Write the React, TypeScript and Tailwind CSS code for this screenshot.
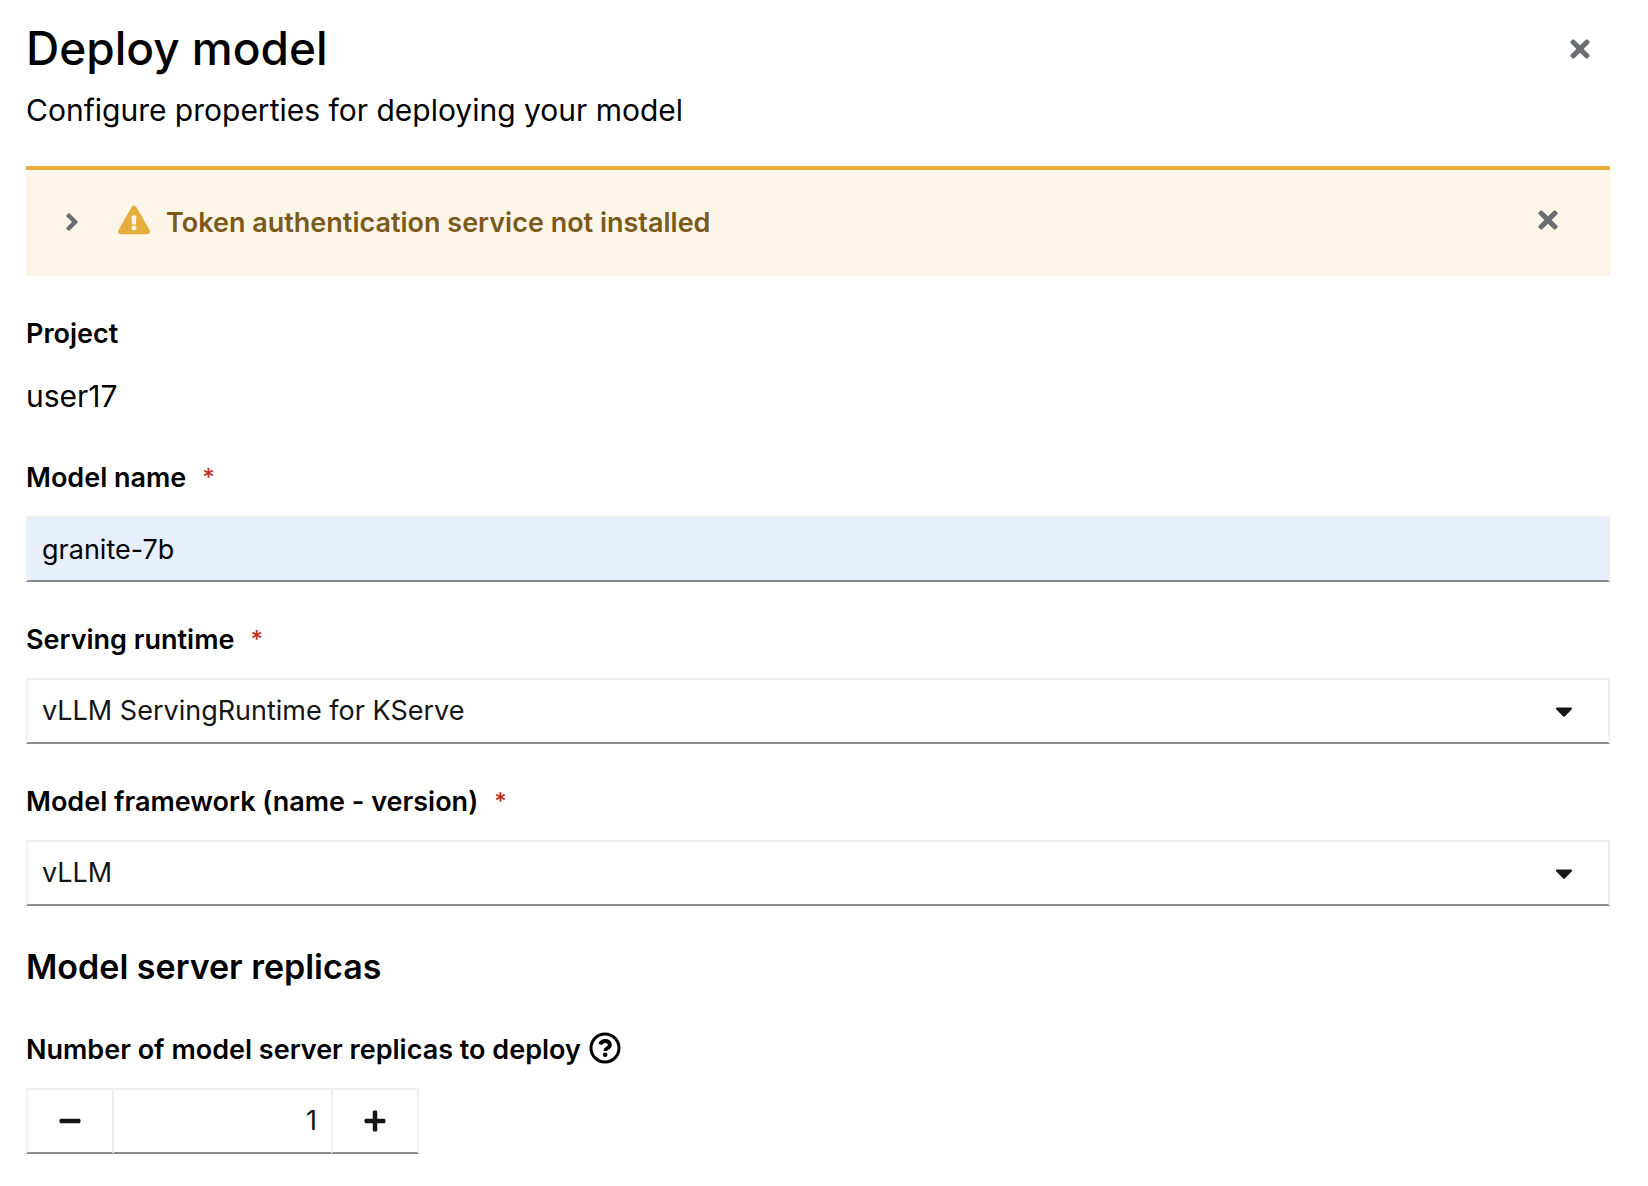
import { useState, type ReactNode } from "react";
import { FaAngleRight, FaCaretDown, FaExclamationTriangle, FaMinus, FaPlus, FaTimes } from "react-icons/fa";

function FieldLabel({ htmlFor, required, children }: { htmlFor: string; required?: boolean; children: ReactNode }) {
  return (
    <label htmlFor={htmlFor} className="flex h-12 items-center pt-1 text-[27px] leading-10 font-semibold">
      {children}
      {required && <span className="ml-4 text-[24px] font-medium text-[#c03020]">*</span>}
    </label>
  );
}

function SelectField({ id, label, value }: { id: string; label: string; value: string }) {
  return (
    <div className="mt-8">
      <FieldLabel htmlFor={id} required>{label}</FieldLabel>
      <div className="relative mt-4">
        <select
          id={id}
          defaultValue={value}
          className="h-[66px] w-full appearance-none rounded-none border-2 border-[#f0f0f0] border-b-[#8a8b91] bg-white px-3.5 text-[27px] text-[#151515]"
        >
          <option>{value}</option>
        </select>
        <FaCaretDown className="pointer-events-none absolute top-[19px] right-8 size-7 text-[#151515]" />
      </div>
    </div>
  );
}

function HelpIcon() {
  return (
    <svg viewBox="0 0 32 32" className="size-8" fill="none" stroke="currentColor" aria-hidden="true">
      <circle cx="16" cy="16" r="14" strokeWidth="3" />
      <path d="M11.2 12.4C12 10.200 13.800 9 16.200 9c2.800 0 4.700 1.500 4.700 3.700 0 1.800-1.100 2.700-2.400 3.500-1.500.9-2.200 1.300-2.200 2.700" strokeWidth="3.800" />
      <circle cx="16.200" cy="22.800" r="2.300" fill="currentColor" stroke="none" />
    </svg>
  );
}

export default function App() {
  const [replicas, setReplicas] = useState("1");
  const step = (n: number) => setReplicas(String(Math.max(0, Number(replicas) + n)));

  return (
    <main className="min-h-screen bg-white pt-5 pr-[38px] pb-8 pl-[26px] font-['Inter',sans-serif] text-black">
      <header className="flex items-start justify-between">
        <div>
          <h1 className="text-[46px] leading-[56px] font-medium">Deploy model</h1>
          <p className="mt-3 text-[30px] leading-[44px]">Configure properties for deploying your model</p>
        </div>
        <button type="button" aria-label="Close" className="mt-[15px] mr-4 text-[#6a6e73]">
          <FaTimes className="size-7" />
        </button>
      </header>

      <section className="mt-[34px] flex h-[110px] items-start border-t-4 border-[#e5ad3b] bg-[#fdf6e8] pt-8 pr-12 pl-8">
        <button type="button" aria-label="Show details" className="flex h-10 items-center text-[#6a6e73]">
          <FaAngleRight className="size-7" />
        </button>
        <span className="ml-8 flex h-9 items-center text-[#e5ad3b]">
          <FaExclamationTriangle className="size-8" />
        </span>
        <h2 className="ml-4 flex-1 pt-px text-[27px] leading-10 font-semibold text-[#795a1a]">Token authentication service not installed</h2>
        <button type="button" aria-label="Dismiss alert" className="flex h-9 items-center text-[#6a6e73]">
          <FaTimes className="size-7" />
        </button>
      </section>

      <form onSubmit={(e) => e.preventDefault()}>
        <div className="mt-8">
          <h3 className="flex h-12 items-center pt-1 text-[27px] leading-10 font-semibold">Project</h3>
          <p className="mt-4 text-[30px] leading-[48px]">user17</p>
        </div>

        <div className="mt-8">
          <FieldLabel htmlFor="model-name" required>Model name</FieldLabel>
          <input
            id="model-name"
            type="text"
            defaultValue="granite-7b"
            className="mt-4 block h-[66px] w-full border-2 border-[#f0f0f0] border-b-[#8a8b91] bg-[#e8effc] px-3.5 text-[27px]"
          />
        </div>

        <SelectField id="serving-runtime" label="Serving runtime" value="vLLM ServingRuntime for KServe" />
        <SelectField id="model-framework" label="Model framework (name - version)" value="vLLM" />

        <h2 className="mt-9 text-[34px] leading-[50px] font-semibold">Model server replicas</h2>

        <div className="mt-8">
          <div className="flex items-center gap-2">
            <FieldLabel htmlFor="replicas">Number of model server replicas to deploy</FieldLabel>
            <button type="button" aria-label="More info about replicas"><HelpIcon /></button>
          </div>
          <div className="mt-4 flex h-[66px] text-[#151515]">
            <button type="button" aria-label="Minus" onClick={() => step(-1)} className="flex w-[88px] items-center justify-center border-2 border-[#f0f0f0] border-b-[#8a8b91]">
              <FaMinus className="size-6" />
            </button>
            <input
              id="replicas"
              type="text"
              inputMode="numeric"
              value={replicas}
              onChange={(e) => setReplicas(e.target.value)}
              className="w-[217px] border-y-2 border-[#f0f0f0] border-b-[#8a8b91] px-3.5 text-right text-[27px]"
            />
            <button type="button" aria-label="Plus" onClick={() => step(1)} className="flex w-[88px] items-center justify-center border-2 border-[#f0f0f0] border-b-[#8a8b91]">
              <FaPlus className="size-6" />
            </button>
          </div>
        </div>
      </form>
    </main>
  );
}
